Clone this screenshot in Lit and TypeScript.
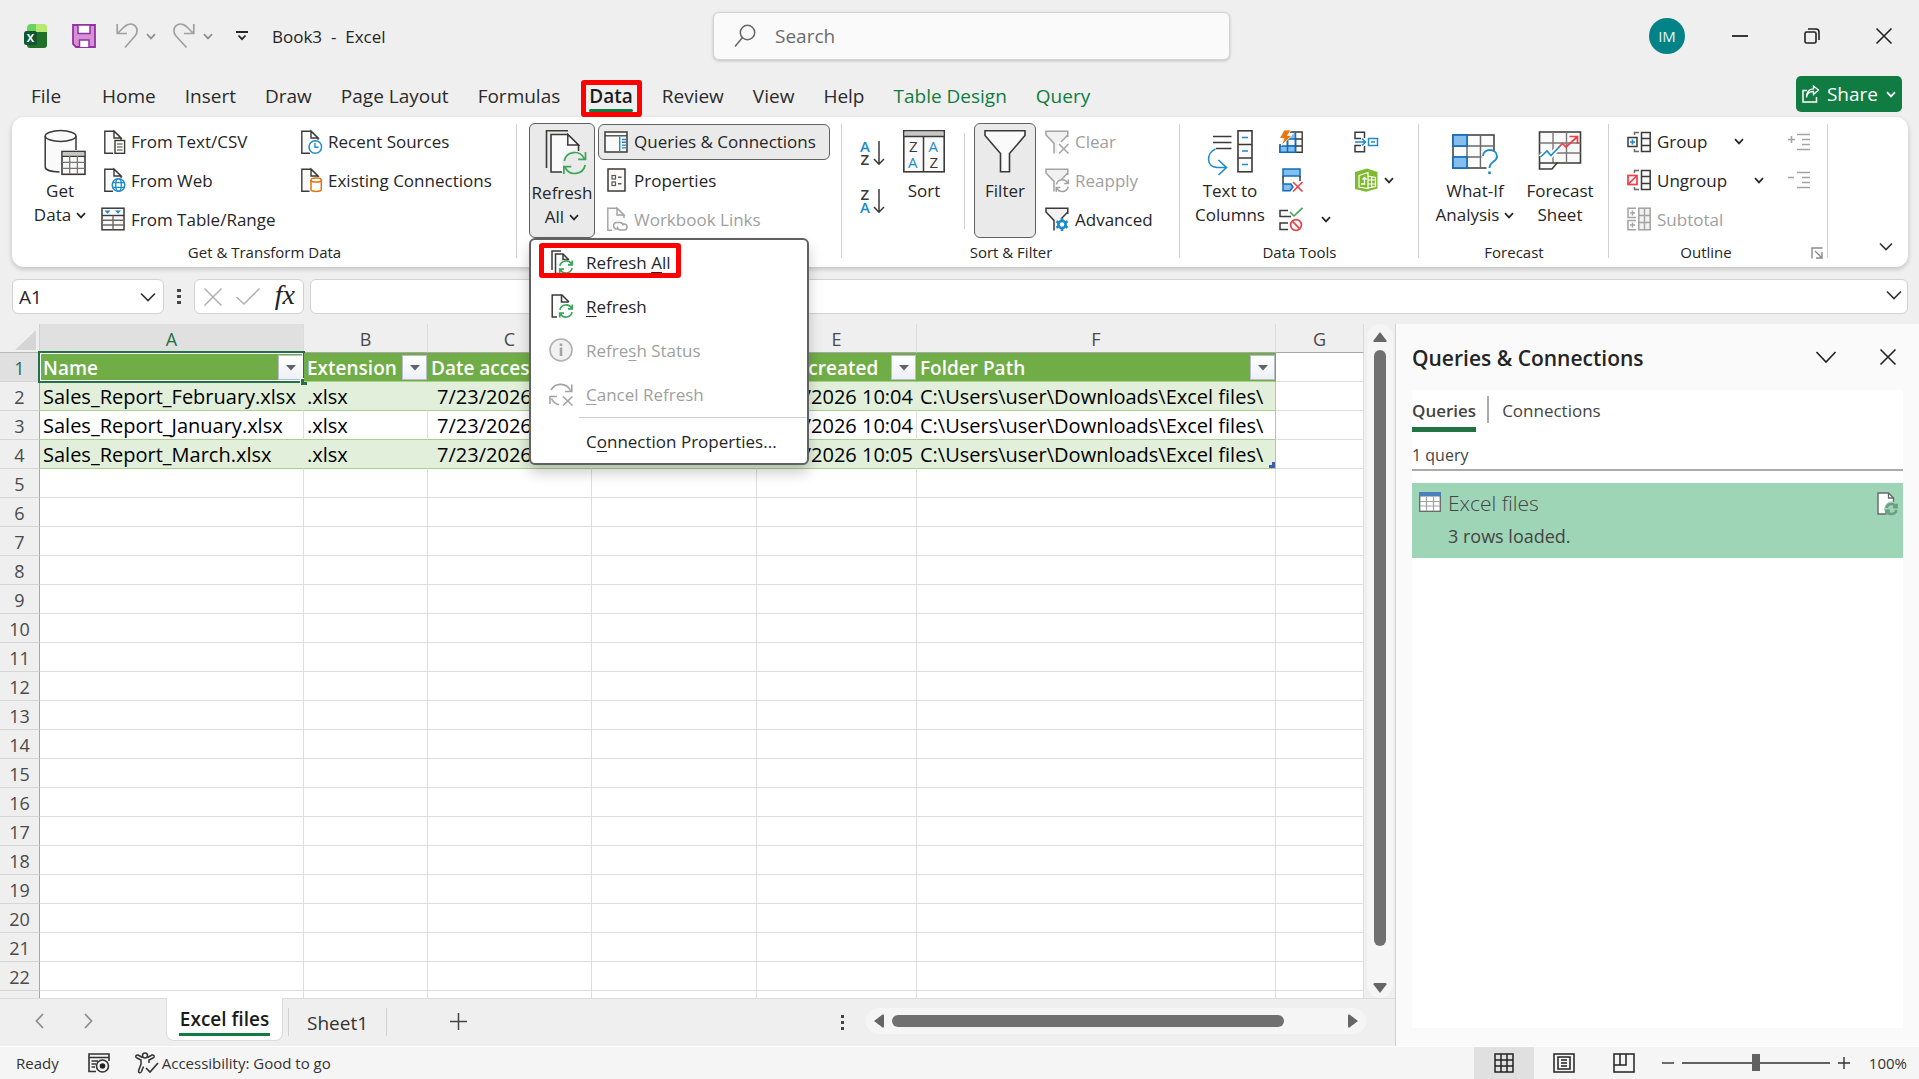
import { LitElement, html, svg, css, nothing, TemplateResult } from "lit";
import { customElement, property } from "lit/decorators.js";
import { classMap } from "lit/directives/class-map.js";

const K = "#3b3a39";
const BLUE = "#1e8bcd";
const GREEN = "#3ba55a";
const RED = "#ee3f46";
const GREY = "#a3a3a3";
const FILL = "#fafafa";

type Art = TemplateResult | TemplateResult[];

const icon = (w: number, h: number, art: Art) =>
  html`<svg width=${w} height=${h} viewBox="0 0 ${w} ${h}" fill="none" aria-hidden="true">${art}</svg>`;

/* ---------- shared shapes ---------- */

const page = (c: string) => svg`
  <path d="M12 23.2H3.8V1.2H13L20 8V11" fill=${FILL} stroke=${c} stroke-width="1.4"/>
  <path d="M13 1.2V8H20Z" fill="#fff" stroke=${c} stroke-width="1.4"/>`;

const arrows = (x: number, y: number, s: number, c: string, w = 1.5) => svg`
  <g transform="translate(${x} ${y}) scale(${s})" stroke=${c} stroke-width=${w / s} fill="none">
    <path d="M-10.5-2A10.7 10.7 0 0 1 9.6-4.4M10.8-11V-3.6H3.4"/>
    <path d="M10.5 2A10.7 10.7 0 0 1-9.6 4.4M-10.8 11V3.6H-3.4"/>
  </g>`;

const funnel = (c: string) => svg`
  <path d="M1 1.2H23V5L14.5 13.5V23H9.5V13.5L1 5Z" fill="#f1f1f1"/>
  <path d="M22.8 7V1.2H1V5L9 13.4V23.5M22.8 5L16 12" stroke=${c} stroke-width="1.5"/>`;

const chevron = (w = 10) =>
  html`<svg class="chev" width=${w} height=${w / 2 + 2} viewBox="0 0 10 7" fill="none" aria-hidden="true">
    <path d="M1 1.2L5 5.4L9 1.2" stroke="currentColor" stroke-width="1.7"/></svg>`;

const wideChevron = (w: number) =>
  icon(w, w / 2 + 2, svg`<path d="M1 1.5L${w / 2} ${w / 2 + 0.5}L${w - 1} 1.5" stroke="#333" stroke-width="1.7"/>`);

/* ---------- ribbon icons ---------- */

const I = {
  getData: icon(42, 46, svg`
    <path d="M1.2 7V38C1.2 41 8 43 16.5 43H17V23H32V7" fill=${FILL}/>
    <ellipse cx="16.6" cy="7" rx="15.4" ry="5.4" fill=${FILL} stroke=${K} stroke-width="1.5"/>
    <path d="M1.2 7V38C1.2 40.800 7 42.800 15.500 43M32 7V21" stroke=${K} stroke-width="1.5"/>
    <rect x="18" y="22.500" width="23" height="22.800" fill=${FILL} stroke=${K} stroke-width="1.600"/>
    <path d="M18.800 23.300H40.200V27H18.800Z" fill="#c8c6c4"/>
    <path d="M18 27.400H41" stroke=${K} stroke-width="1.200"/>
    <path d="M18 33.400H41M18 39.400H41M25.700 27V45M33.400 27V45" stroke="#797774" stroke-width="1.300"/>`),
  text: icon(24, 24, svg`${page(K)}
    <rect x="14" y="10.500" width="9.600" height="12.800" fill="#fff" stroke=${K} stroke-width="1.400"/>
    <path d="M16 14H21.600M16 17H21.600M16 20H21.600" stroke=${K} stroke-width="1.200"/>`),
  web: icon(24, 24, svg`${page(K)}
    <circle cx="17.500" cy="17" r="7.600" fill="#fff"/>
    <circle cx="17.500" cy="17" r="6.300" fill="#fff" stroke=${BLUE} stroke-width="1.500"/>
    <ellipse cx="17.500" cy="17" rx="2.800" ry="6.300" stroke=${BLUE} stroke-width="1.300"/>
    <path d="M11.500 14.700H23.500M11.500 19.300H23.500" stroke=${BLUE} stroke-width="1.300"/>`),
  range: icon(24, 24, svg`
    <rect x="1" y="1.200" width="22" height="21.600" fill=${FILL} stroke=${K} stroke-width="1.500"/>
    <path d="M1 8.500H23" stroke=${K} stroke-width="1.400"/>
    <path d="M1 13.300H23M1 18H23M12 8.500V22.500" stroke="#6b6967" stroke-width="1.400"/>
    <path d="M3.500 3.500H9.500L6.500 6.800ZM14 3.500H20L17 6.800Z" fill=${BLUE}/>`),
  recent: icon(24, 24, svg`${page(K)}
    <circle cx="17.300" cy="17" r="7.800" fill="#fff"/>
    <circle cx="17.300" cy="17" r="6.300" fill="#fff" stroke=${BLUE} stroke-width="1.500"/>
    <path d="M17 13V17.300H20.500" stroke=${BLUE} stroke-width="1.400"/>`),
  existing: icon(24, 24, svg`${page(K)}
    <rect x="11.500" y="9" width="12.500" height="15" fill="#fff"/>
    <path d="M13 12V21.500C13 24 23.300 24 23.300 21.500V12" fill="#fff" stroke="#e0730c" stroke-width="1.500"/>
    <ellipse cx="18.150" cy="12" rx="5.150" ry="2.100" fill="#fff" stroke="#e0730c" stroke-width="1.500"/>`),
  refreshBig: icon(42, 46, svg`
    <path d="M1.500 39V1.700H23" stroke=${K} stroke-width="1.600"/>
    <path d="M17 43H6V5.500H22.800L33.500 16V22" fill=${FILL} stroke=${K} stroke-width="1.600"/>
    <path d="M22.800 5.500V16H33.500Z" fill="#fff" stroke=${K} stroke-width="1.500"/>
    <circle cx="29.700" cy="34" r="12.500" fill="#eaeaea"/>
    ${arrows(29.7, 34, 1, GREEN, 1.7)}`),
  queries: icon(24, 24, svg`
    <rect x="1" y="2" width="22" height="20" fill=${FILL} stroke=${K} stroke-width="1.500"/>
    <path d="M1 5.800H23" stroke=${K} stroke-width="1.300"/>
    <path d="M15.700 6.500V21.500" stroke=${BLUE} stroke-width="1.400"/>
    <path d="M18 9.500H22M18 12.300H22M18 15.100H22M18 17.900H22" stroke=${BLUE} stroke-width="1.400"/>`),
  properties: icon(24, 24, svg`
    <rect x="4" y="1" width="17" height="22" fill=${FILL} stroke=${K} stroke-width="1.500"/>
    <rect x="8" y="7.500" width="3.500" height="3.500" stroke="#5b5957" stroke-width="1.200"/>
    <rect x="8" y="14" width="3.500" height="3.500" stroke="#5b5957" stroke-width="1.200"/>
    <path d="M14 9.200H17.500M14 15.700H17.500" stroke="#5b5957" stroke-width="1.400"/>`),
  links: icon(24, 24, svg`${page(GREY)}
    <rect x="8" y="14" width="16" height="9.800" fill="#fff"/>
    <path d="M14 22H12A3.400 3.400 0 0 1 12 15.500H16A3.200 3.200 0 0 1 19 18.500" stroke=${GREY} stroke-width="1.500"/>
    <path d="M18 17H20A3 3 0 0 1 20 23H16A3 3 0 0 1 13.500 19.500" stroke=${GREY} stroke-width="1.500"/>`),
  az: icon(24, 26, svg`
    <text x="0" y="11.500" class="az" fill=${BLUE}>A</text>
    <text x="0.500" y="24.500" class="az" fill=${K}>Z</text>
    <path d="M19 1V24M14 19L19 24.200L24 19" stroke=${K} stroke-width="1.500"/>`),
  za: icon(24, 26, svg`
    <text x="0.500" y="11.500" class="az" fill=${K}>Z</text>
    <text x="0" y="24.500" class="az" fill=${BLUE}>A</text>
    <path d="M19 1V24M14 19L19 24.200L24 19" stroke=${K} stroke-width="1.500"/>`),
  sort: icon(42, 46, svg`
    <rect x="0.800" y="1.800" width="40.400" height="41" fill=${FILL} stroke=${K} stroke-width="1.600"/>
    <path d="M1.600 2.600H40.400V7H1.600Z" fill="#c8c6c4"/>
    <path d="M1 7.600H41M20.500 7.600V43" stroke=${K} stroke-width="1.500"/>
    <text x="6" y="22.500" class="zz" fill=${K}>Z</text><text x="5" y="38.500" class="zz" fill=${BLUE}>A</text>
    <text x="25.500" y="22.500" class="zz" fill=${BLUE}>A</text><text x="26.500" y="38.500" class="zz" fill=${K}>Z</text>`),
  filter: icon(42, 46, svg`
    <path d="M1 1.800H41V6.500L25.500 24.500V42.800H16.500V24.500L1 6.500Z" fill=${FILL} stroke=${K} stroke-width="1.600"/>`),
  clear: icon(24, 24, svg`${funnel(GREY)}
    <path d="M12.500 12.500H24V24H12.500Z" fill="#fff"/>
    <path d="M14 14L23.500 23.500M23.500 14L14 23.500" stroke=${GREY} stroke-width="1.500"/>`),
  reapply: icon(24, 24, svg`${funnel(GREY)}<rect x="10.500" y="11" width="14" height="13" fill="#fff"/>
    ${arrows(17.3, 17.6, 0.56, GREY, 1.5)}`),
  advanced: icon(24, 24, svg`${funnel(K)}<circle cx="17" cy="17.500" r="6" fill="#fff"/>
    <circle cx="17" cy="17.500" r="3.600" stroke=${BLUE} stroke-width="2.600"/>
    <path d="M17 11V13.500M17 21.500V24M11.400 14.300L13.500 15.500M20.500 19.500L22.600 20.700M11.400 20.700L13.500 19.500M20.500 15.500L22.600 14.300" stroke=${BLUE} stroke-width="2.600"/>`),
  columns: icon(46, 46, svg`
    <path d="M6 7.500H24.500M6 13.500H24.500M9 19.500H24.500" stroke=${K} stroke-width="1.500"/>
    <path d="M8.500 20C-1 24 -1 38 10 38.500H19M11.500 31L19.500 38.500L11.500 46" stroke=${BLUE} stroke-width="1.600"/>
    <rect x="31" y="1.800" width="14" height="41" fill=${FILL} stroke=${K} stroke-width="1.600"/>
    <path d="M31 15.500H45M31 29H45" stroke=${K} stroke-width="1.500"/>
    <path d="M35 8.500H41M35 22H41M35 35.500H41" stroke=${BLUE} stroke-width="1.600"/>`),
  flash: icon(24, 24, svg`
    <path d="M5.500 2H23.200V22.300H1V14" fill=${FILL} stroke=${K} stroke-width="1.400"/>
    <path d="M14 4L16.500 2V9H8.500Z" fill="#83beec"/>
    <path d="M8.500 9H16.500V16H8.500Z" fill=${FILL} stroke="#0f6cbd" stroke-width="1.500"/>
    <path d="M1 16H16.500V22.300H1Z" fill="#83beec" stroke="#0f6cbd" stroke-width="1.500"/>
    <path d="M8.500 9V22.300M16.500 2V22.300" stroke="#0f6cbd" stroke-width="1.500"/>
    <path d="M16.500 9H23M16.500 16H23" stroke=${K} stroke-width="1.300"/>
    <path d="M5 0H12L8.500 5.500H13L2.500 15.500L5 8.500H0.500Z" fill="#e8760e" stroke="#fff" stroke-width="0.800"/>`),
  duplicates: icon(24, 24, svg`
    <rect x="4" y="1" width="17" height="7" fill="#83beec" stroke="#0f6cbd" stroke-width="1.500"/>
    <path d="M4 8V16M21 8V13" stroke=${K} stroke-width="1.500"/>
    <path d="M12 16H4V22.800H11L14 19Z" fill="#83beec" stroke="#0f6cbd" stroke-width="1.500"/>
    <path d="M14 14L23.500 23.500M23.500 14L14 23.500" stroke=${RED} stroke-width="1.600"/>`),
  validation: icon(24, 24, svg`
    <path d="M9 3.500H1V9.500H12M9 16H1V22.500H9" stroke=${K} stroke-width="1.500"/>
    <path d="M11 5L15 9L23.500 0.800" stroke=${GREEN} stroke-width="1.600"/>
    <circle cx="17" cy="18" r="5.400" stroke=${RED} stroke-width="1.700"/>
    <path d="M13.200 14.200L20.800 21.800" stroke=${RED} stroke-width="1.700"/>`),
  consolidate: icon(24, 24, svg`
    <path d="M10.500 8V2.200H1V8.500H7M10.500 16V21.800H1V15.500H7" stroke=${K} stroke-width="1.500"/>
    <path d="M1 12H11.500M8 8.500L11.500 12L8 15.500" stroke=${BLUE} stroke-width="1.500"/>
    <rect x="14.500" y="8.500" width="9" height="7" stroke=${BLUE} stroke-width="1.500"/>
    <path d="M17 12H21" stroke=${BLUE} stroke-width="1.500"/>`),
  model: icon(24, 24, svg`
    <path d="M1 4L13 0.500L23.500 4V20.500L12 23.800L1 21Z" fill="#7fba2f"/>
    <path d="M5 7.500L14 4.500V20.500L5 19Z" fill="#7fba2f" stroke="#fff" stroke-width="1.200"/>
    <path d="M14 8L21.500 9.500V18.500L14 20M14 12H21.500M14 16H21.500M17.700 9V19.500" stroke="#fff" stroke-width="1.200"/>
    <path d="M7 16H10.500V10M8.500 11.500L10.500 9.500L12.500 11.500" stroke="#fff" stroke-width="1.300"/>`),
  whatIf: icon(46, 46, svg`
    <rect x="1" y="6" width="41" height="33" fill=${FILL} stroke=${K} stroke-width="1.500"/>
    <path d="M1 17H42M1 28H42M28.500 6V39M15 6V39" stroke="#6b6967" stroke-width="1.500"/>
    <rect x="1" y="6" width="14" height="11" fill="#83beec" stroke="#0f6cbd" stroke-width="1.600"/>
    <rect x="1" y="28" width="14" height="11" fill="#83beec" stroke="#0f6cbd" stroke-width="1.600"/>
    <path d="M29.500 22H44V45H34.500V38H29.500Z" fill="#fff"/>
    <path d="M31 27C31 19 45 19 45 27.500C45 33 37.500 32 37.500 39" stroke=${BLUE} stroke-width="1.900"/>
    <rect x="36.200" y="42.500" width="2.600" height="2.600" fill=${BLUE}/>`),
  forecast: icon(44, 46, svg`
    <path d="M1.500 3H42.500V34H19L14 40H1.500Z" fill=${FILL} stroke=${K} stroke-width="1.600"/>
    <path d="M1.500 14H42.500M1.500 24H42.500M15 3V34M28.500 3V34" stroke="#797774" stroke-width="1.400"/>
    <path d="M1.500 34H20" stroke=${K} stroke-width="1.500"/>
    <path d="M2.500 28L9 22L13 26.500L22 17" stroke="#fff" stroke-width="5"/>
    <path d="M2.500 28L9 22L13 26.500L22 17" stroke=${BLUE} stroke-width="1.700"/>
    <path d="M21 18L24.500 14.500L28 18L39.500 7.500M31.500 7.500H39.500V15" stroke=${RED} stroke-width="1.700"/>`),
  group: icon(24, 24, svg`
    <path d="M12 2.500H7.500V5M12 21.500H7.500V19" stroke="#6b6967" stroke-width="1.500"/>
    <rect x="14.500" y="2.500" width="8.700" height="19" fill=${FILL} stroke=${K} stroke-width="1.500"/>
    <path d="M14.500 8.500H23M14.500 15.500H23" stroke=${K} stroke-width="1.400"/>
    <rect x="1" y="7.500" width="9" height="9" fill=${FILL} stroke=${K} stroke-width="1.500"/>
    <path d="M5.500 9.500V14.500M3 12H8" stroke=${BLUE} stroke-width="1.700"/>`),
  ungroup: icon(24, 24, svg`
    <path d="M12 2.500H7.500V5M12 21.500H7.500V19" stroke="#6b6967" stroke-width="1.500"/>
    <rect x="14.500" y="2.500" width="8.700" height="19" fill=${FILL} stroke=${K} stroke-width="1.500"/>
    <path d="M14.500 8.500H23M14.500 15.500H23" stroke=${K} stroke-width="1.400"/>
    <rect x="1" y="7.500" width="9" height="9" fill="#fff" stroke=${RED} stroke-width="1.700"/>
    <path d="M1.500 16L9.500 8" stroke=${RED} stroke-width="1.700"/>`),
  subtotal: icon(24, 24, svg`
    <path d="M9 1.200H1V10.500H9M9 13.500H1V22.800H9" stroke=${GREY} stroke-width="1.500"/>
    <path d="M5.500 3.500V8.500M3 6H8M5.500 15.500V20.500M3 18H8" stroke=${GREY} stroke-width="1.500"/>
    <rect x="11.800" y="1.200" width="11.400" height="21.600" fill="#f1f1f1" stroke=${GREY} stroke-width="1.500"/>
    <path d="M17.500 1V23M12 8.500H23M12 15.500H23" stroke=${GREY} stroke-width="1.400"/>`),
  showDetail: icon(22, 18, svg`
    <path d="M9 1.500H22M14 6.500H22M14 11.500H22M9 16.500H22M0 6.500H7M3.500 3V10" stroke=${GREY} stroke-width="1.600"/>`),
  hideDetail: icon(22, 18, svg`
    <path d="M9 1.500H22M14 6.500H22M14 11.500H22M9 16.500H22M0 6.500H6" stroke=${GREY} stroke-width="1.600"/>`),
  menuAll: icon(24, 24, svg`<g transform="translate(2 0)">
    <path d="M1 20V1H10" stroke=${K} stroke-width="1.500"/>
    <path d="M7 23.500H4.500V4H12L18 10" fill=${FILL} stroke=${K} stroke-width="1.500"/>
    <path d="M12 4V9.500H17.500" stroke=${K} stroke-width="1.500"/>
    <circle cx="15" cy="17" r="7.300" fill="#fff"/>${arrows(15, 17, 0.58, GREEN, 1.7)}</g>`),
  menuRefresh: icon(24, 24, svg`<g transform="translate(2 0)">
    <path d="M6 23H1.200V1H11L18 8" fill=${FILL} stroke=${K} stroke-width="1.500"/>
    <path d="M10.500 1V8H17.500" stroke=${K} stroke-width="1.500"/>
    <circle cx="15" cy="17" r="7.300" fill="#fff"/>${arrows(15, 17, 0.58, GREEN, 1.7)}</g>`),
  menuStatus: icon(24, 24, svg`
    <circle cx="12" cy="12" r="11" fill="#f1f1f1" stroke="#b0b0b0" stroke-width="1.600"/>
    <path d="M12 9.500V18M12 5.500V8" stroke=${GREY} stroke-width="2.600"/>`),
  menuCancel: icon(24, 24, svg`
    <path d="M2 8A11 11 0 0 1 21.500 8.500M22.800 2.500V9.500H16M10 22.800A11 11 0 0 1 2.500 16.500M1 22V14.500H8" stroke=${GREY} stroke-width="1.600"/>
    <path d="M14 14.500L23.500 23.500M23.500 14.500L14 23.500" stroke=${GREY} stroke-width="1.600"/>`),
};

/* ---------- data ---------- */

const TABS = ["File", "Home", "Insert", "Draw", "Page Layout", "Formulas", "Data", "Review", "View", "Help", "Table Design", "Query"];

const COLUMNS = [
  { letter: "A", width: 264, title: "Name" },
  { letter: "B", width: 124, title: "Extension" },
  { letter: "C", width: 164, title: "Date accessed" },
  { letter: "D", width: 165, title: "Date modified" },
  { letter: "E", width: 160, title: "Date created" },
  { letter: "F", width: 359, title: "Folder Path" },
  { letter: "G", width: 0, title: "" },
];

const FOLDER = "C:\\Users\\user\\Downloads\\Excel files\\";
const FILES = [
  ["Sales_Report_February.xlsx", ".xlsx", "7/23/2026 10:04", "7/23/2026 10:04", "7/23/2026 10:04", FOLDER],
  ["Sales_Report_January.xlsx", ".xlsx", "7/23/2026 10:04", "7/23/2026 10:04", "7/23/2026 10:04", FOLDER],
  ["Sales_Report_March.xlsx", ".xlsx", "7/23/2026 10:05", "7/23/2026 10:05", "7/23/2026 10:05", FOLDER],
];

const base = css`
  :host, *, *::before, *::after { box-sizing: border-box; }
  button, input { font: inherit; color: inherit; margin: 0; }
  button { background: none; border: 0; padding: 0; cursor: default; display: flex; align-items: center; }
  svg { display: block; flex: none; overflow: visible; }
`;

/* ---------- title bar and tabs ---------- */

@customElement("title-bar")
class TitleBar extends LitElement {
  static styles = [base, css`
    :host { display: block; }
    .bar { display: grid; grid-template-columns: 713px minmax(200px, 517px) 1fr; height: 72px; padding-top: 12px; align-items: start; }
    .left, .right { display: flex; align-items: center; height: 48px; }
    .left { padding-left: 24px; }
    .save { margin-left: 25px; }
    .undo { margin-left: 20px; gap: 8px; color: #8f8f8f; }
    .redo { margin-left: 17px; }
    .more { margin-left: 23px; }
    .title { margin-left: 24px; font-size: 17px; white-space: pre; color: #242424; }
    .search { display: flex; align-items: center; gap: 19px; height: 48px; padding: 0 20px; background: #fafafa; border: 1px solid #d4d4d4; border-radius: 6px; box-shadow: 0 1px 3px #0003; }
    .search input { flex: 1; min-width: 0; border: 0; background: none; outline: 0; font-size: 19px; padding: 0; }
    .search input::placeholder { color: #6b6b6b; opacity: 1; }
    .right { justify-content: flex-end; padding-right: 26px; }
    .avatar { width: 36px; height: 36px; border-radius: 50%; background: #038387; color: #e4f2f2; font-size: 15px; justify-content: center; margin-right: 46px; }
    .win { width: 18px; height: 36px; justify-content: center; margin-left: 54px; }
    .win.first { margin-left: 0; }
    .tabs { display: flex; height: 45px; align-items: flex-start; padding: 4px 17px 0 31px; }
    .list { display: flex; gap: 29px; flex: 1; }
    .tab { position: relative; height: 41px; padding-bottom: 2px; font-size: 19px; white-space: nowrap; color: #2b2b2b; }
    .file { margin-right: 12px; }
    .active { font-weight: 600; color: #1c1c1c; }
    .active::before { content: ""; position: absolute; left: 0; right: 0; bottom: 5px; height: 3px; border-radius: 2px; background: #107c41; }
    .active::after { content: ""; position: absolute; inset: 4px -9px 0 -8px; border: 5px solid #f00; border-radius: 3px; }
    .green { color: #107c41; }
    .share { height: 36px; padding: 0 6px; gap: 8px; border-radius: 5px; background: #107c41; color: #fff; font-size: 19px; }
  `];

  render() {
    return html`
      <header class="bar">
        <div class="left">
          ${icon(23, 24, svg`
            <path d="M7 0H12V10H3V4A4 4 0 0 1 7 0Z" fill="#6fd25f"/><path d="M12 0H20A3 3 0 0 1 23 3V8H12Z" fill="#b7ea73"/>
            <path d="M3 8H23V21A3 3 0 0 1 20 24H6A3 3 0 0 1 3 21Z" fill="#21702a"/>
            <rect x="0" y="7" width="13" height="14" rx="2.500" fill="#0e5733"/>
            <text x="6.500" y="18.200" text-anchor="middle" font-family="Open Sans, sans-serif" font-weight="700" font-size="11" fill="#fff">X</text>`)}
          <button class="save" aria-label="Save">${icon(24, 24, svg`
            <path d="M1 1H23V23H4L1 20Z" fill="#d691d9" stroke="#9332a0" stroke-width="1.800"/>
            <path d="M6 1H18V9.500H6Z" fill="#fff" stroke="#9332a0" stroke-width="1.500"/>
            <path d="M7.500 23V16H17V23" fill="#fff" stroke="#9332a0" stroke-width="1.500"/>`)}</button>
          <button class="undo" aria-label="Undo">${icon(22, 26, svg`
            <path d="M1.200 1V10.500H11M1.500 10.500L8 4C17-4 25 6 19 13L9 24.500" stroke="#a0a0a0" stroke-width="1.700"/>`)}${chevron()}</button>
          <button class="undo redo" aria-label="Redo">${icon(22, 26, svg`
            <path d="M20.800 1V10.500H11M20.500 10.500L14 4C5-4-3 6 3 13L13.500 24.500" stroke="#a0a0a0" stroke-width="1.700"/>`)}${chevron()}</button>
          <button class="more" aria-label="Customize Quick Access Toolbar">${icon(12, 10, svg`
            <path d="M0 1H12M2.500 4.500L6 8.200L9.500 4.500" stroke="#262626" stroke-width="1.800"/>`)}</button>
          <span class="title">Book3  -  Excel</span>
        </div>
        <label class="search">
          ${icon(22, 24, svg`<circle cx="13.500" cy="8.500" r="7.200" stroke="#666" stroke-width="1.500"/><path d="M8.500 13.500L1 22.500" stroke="#666" stroke-width="1.500"/>`)}
          <input type="search" placeholder="Search" aria-label="Search">
        </label>
        <div class="right">
          <button class="avatar" aria-label="Account">IM</button>
          <button class="win first" aria-label="Minimize">${icon(16, 2, svg`<path d="M0 1H16" stroke="#222" stroke-width="1.800"/>`)}</button>
          <button class="win" aria-label="Restore">${icon(16, 16, svg`
            <rect x="1" y="4" width="11" height="11" rx="1.500" stroke="#222" stroke-width="1.600"/>
            <path d="M4 1H12A3 3 0 0 1 15 4V12" stroke="#222" stroke-width="1.600"/>`)}</button>
          <button class="win" aria-label="Close">${icon(16, 16, svg`<path d="M0.500 0.500L15.500 15.500M15.500 0.500L0.500 15.500" stroke="#222" stroke-width="1.600"/>`)}</button>
        </div>
      </header>
      <nav class="tabs">
        <div class="list" role="tablist">
          ${TABS.map((t, i) => html`<button role="tab" class=${classMap({ tab: true, file: i === 0, active: t === "Data", green: i > 9 })}>${t}</button>`)}
        </div>
        <button class="share">${icon(17, 18, svg`
          <path d="M5 5.500H1V17H14.500V12" stroke="#fff" stroke-width="1.500"/>
          <path d="M4.500 12.500C5 8 8 6.500 11.500 6.500V9.500L16.500 5L11.500 1V3.800C7 4 4.500 7 4.500 12.500Z" stroke="#fff" stroke-width="1.300"/>`)}Share${chevron()}</button>
      </nav>`;
  }
}

/* ---------- ribbon ---------- */

@customElement("data-ribbon")
class DataRibbon extends LitElement {
  static styles = [base, css`
    :host { display: block; padding: 0 11px 0 12px; position: relative; z-index: 2; }
    .ribbon { display: flex; height: 150px; background: #fff; border-radius: 12px; box-shadow: 0 2px 5px #0003; font-size: 17px; color: #262626; padding-top: 6px; }
    .group { display: flex; flex-direction: column; position: relative; flex: none; }
    .group::after { content: ""; position: absolute; right: 0; top: 1px; height: 134px; width: 1px; background: #d1d1d1; }
    .g1 { width: 505px; } .g2 { width: 325px; } .g3 { width: 338px; } .g4 { width: 239px; } .g5 { width: 190px; } .g6 { width: 219px; }
    .body { display: flex; gap: 3px; height: 116px; padding: 0 10px 0 12px; }
    .g1 .body { padding-left: 16px; } .g4 .body, .g5 .body { padding-left: 10px; }
    .caption { height: 28px; line-height: 26px; text-align: center; font-size: 15px; }
    .g6 .caption { display: flex; justify-content: center; padding-right: 25px; }
    .launch { position: absolute; right: 5px; bottom: 8px; }
    .big { flex-direction: column; height: 115px; padding-top: 5px; border: 1px solid transparent; border-radius: 6px; line-height: 24px; white-space: nowrap; }
    .big > svg { margin-bottom: 4px; }
    .w64 > svg { margin-left: 9px; }
    .w66 > svg { margin: 0 0 6px 7px; }
    .line { display: flex; align-items: center; gap: 5px; }
    .w62 { width: 62px; } .w64 { width: 64px; } .w66 { width: 66px; } .w72 { width: 72px; } .w80 { width: 80px; } .w92 { width: 92px; }
    .col { display: grid; grid-template-rows: 37px 40px 38px; align-items: center; align-content: start; justify-items: start; }
    .c194 { width: 194px; } .c72 { width: 72px; } .c158 { width: 158px; }
    .small { height: 36px; gap: 6px; padding: 0 5px; border: 1px solid transparent; border-radius: 6px; white-space: nowrap; }
    .small.toggle { padding-right: 13px; }
    .small.pressed, .big.pressed { background: #eaeaea; border-color: #616161; }
    .small.wide { gap: 18px; } .far .chev { margin-left: 21px; }
    .off { color: #a0a0a0; }
    .orders { display: flex; flex-direction: column; gap: 12px; padding-top: 12px; width: 36px; }
    .divider { width: 1px; height: 96px; margin: 10px 6px; background: #d1d1d1; }
    .az { font: 600 15px "Open Sans", sans-serif; }
    .zz { font: 400 15px "Open Sans", sans-serif; }
    .collapse { margin: auto 15px 16px auto; }
    .anchor { position: relative; }
    .menu { position: absolute; top: 115px; left: 0; width: 280px; height: 227px; padding: 3px 0 0; background: #fff; border: 2px solid #616161; border-radius: 6px; box-shadow: 0 8px 14px #0003; }
    .item { position: relative; width: 100%; height: 44px; padding-left: 18px; gap: 13px; white-space: nowrap; }
    .item:first-child { height: 41px; padding-bottom: 3px; }
    .item u { text-decoration-thickness: 1px; text-underline-offset: 3px; }
    .item .slot { width: 24px; }
    .item:last-child { height: 47px; }
    .marked::after { content: ""; position: absolute; left: 8px; top: 0; width: 142px; height: 35px; border: 5px solid #f00; border-radius: 3px; }
    .rule { height: 1px; margin: 1px 0 0 48px; background: #d1d1d1; }
  `];

  private small(art: unknown, label: string, opts: { off?: boolean; pressed?: boolean; arrow?: boolean; cls?: string; name?: string } = {}) {
    const cls: Record<string, boolean> = { small: true, off: !!opts.off, pressed: !!opts.pressed };
    if (opts.cls) cls[opts.cls] = true;
    return html`<button class=${classMap(cls)} ?disabled=${!!opts.off} aria-label=${opts.name ?? label}>
      ${art}${label ? html`<span>${label}</span>` : nothing}${opts.arrow ? chevron() : nothing}</button>`;
  }

  private big(art: unknown, lines: string[], width: string, arrow = false, pressed = false) {
    return html`<button class="big ${width} ${pressed ? "pressed" : ""}">${art}
      ${lines.map((l, i) => html`<span class="line">${l}${arrow && i === lines.length - 1 ? chevron() : nothing}</span>`)}</button>`;
  }

  private menu() {
    return html`<div class="menu" role="menu">
      <button class="item marked" role="menuitem">${I.menuAll}<span>Refresh <u>A</u>ll</span></button>
      <button class="item" role="menuitem">${I.menuRefresh}<span><u>R</u>efresh</span></button>
      <button class="item off" role="menuitem" disabled>${I.menuStatus}<span>Refre<u>s</u>h Status</span></button>
      <button class="item off" role="menuitem" disabled>${I.menuCancel}<span><u>C</u>ancel Refresh</span></button>
      <div class="rule" role="separator"></div>
      <button class="item" role="menuitem"><span class="slot"></span><span>C<u>o</u>nnection Properties...</span></button>
    </div>`;
  }

  render() {
    return html`<div class="ribbon">
      <section class="group g1">
        <div class="body">
          ${this.big(I.getData, ["Get", "Data"], "w64", true)}
          <div class="col c194">${this.small(I.text, "From Text/CSV")}${this.small(I.web, "From Web")}${this.small(I.range, "From Table/Range")}</div>
          <div class="col">${this.small(I.recent, "Recent Sources")}${this.small(I.existing, "Existing Connections")}</div>
        </div>
        <div class="caption">Get &amp; Transform Data</div>
      </section>
      <section class="group g2">
        <div class="body">
          <div class="anchor">${this.big(I.refreshBig, ["Refresh", "All"], "w66", true, true)}${this.menu()}</div>
          <div class="col">
            ${this.small(I.queries, "Queries & Connections", { pressed: true, cls: "toggle" })}
            ${this.small(I.properties, "Properties")}
            ${this.small(I.links, "Workbook Links", { off: true })}
          </div>
        </div>
      </section>
      <section class="group g3">
        <div class="body">
          <div class="orders">${this.small(I.az, "", { name: "Sort A to Z" })}${this.small(I.za, "", { name: "Sort Z to A" })}</div>
          ${this.big(I.sort, ["Sort"], "w62")}
          <div class="divider"></div>
          ${this.big(I.filter, ["Filter"], "w62", false, true)}
          <div class="col">${this.small(I.clear, "Clear", { off: true })}${this.small(I.reapply, "Reapply", { off: true })}${this.small(I.advanced, "Advanced")}</div>
        </div>
        <div class="caption">Sort &amp; Filter</div>
      </section>
      <section class="group g4">
        <div class="body">
          ${this.big(I.columns, ["Text to", "Columns"], "w80")}
          <div class="col c72">
            ${this.small(I.flash, "", { name: "Flash Fill" })}${this.small(I.duplicates, "", { name: "Remove Duplicates" })}
            ${this.small(I.validation, "", { name: "Data Validation", arrow: true, cls: "wide" })}
          </div>
          <div class="col">${this.small(I.consolidate, "", { name: "Consolidate" })}${this.small(I.model, "", { name: "Data Model", arrow: true })}</div>
        </div>
        <div class="caption">Data Tools</div>
      </section>
      <section class="group g5">
        <div class="body">
          ${this.big(I.whatIf, ["What-If", "Analysis"], "w92", true)}
          ${this.big(I.forecast, ["Forecast", "Sheet"], "w72")}
        </div>
        <div class="caption">Forecast</div>
      </section>
      <section class="group g6">
        <div class="body">
          <div class="col c158">
            ${this.small(I.group, "Group", { arrow: true, cls: "far" })}${this.small(I.ungroup, "Ungroup", { arrow: true, cls: "far" })}
            ${this.small(I.subtotal, "Subtotal", { off: true })}
          </div>
          <div class="col">${this.small(I.showDetail, "", { off: true, name: "Show Detail" })}${this.small(I.hideDetail, "", { off: true, name: "Hide Detail" })}</div>
        </div>
        <div class="caption">Outline</div>
        <button class="launch" aria-label="Outline settings">${icon(12, 12, svg`
          <path d="M1 11.500V1H11.500M4 4L10.500 10.500M11 5V11H5" stroke="#8a8a8a" stroke-width="1.400"/>`)}</button>
      </section>
      <button class="collapse" aria-label="Collapse the Ribbon">${wideChevron(14)}</button>
    </div>`;
  }
}

/* ---------- formula bar ---------- */

@customElement("formula-bar")
class FormulaBar extends LitElement {
  static styles = [base, css`
    .bar { display: flex; padding: 12px 11px 10px 12px; height: 57px; }
    .box { display: flex; align-items: center; height: 35px; background: #fff; border: 1px solid #d1d1d1; border-radius: 6px; }
    .name { width: 152px; padding: 0 7px 0 6px; }
    input { border: 0; background: none; outline: 0; padding: 0; min-width: 0; flex: 1; font-size: 19px; color: #262626; }
    .dots { display: flex; flex-direction: column; gap: 3px; justify-content: center; width: 30px; align-items: center; }
    .dots i { width: 4px; height: 3px; background: #444; }
    .tools { width: 110px; padding: 0 8px 0 9px; justify-content: space-between; }
    .fx { font: italic 400 28px "Liberation Serif", serif; color: #222; line-height: 30px; padding-bottom: 3px; }
    .formula { flex: 1; margin-left: 6px; padding: 0 5px 3px 8px; }
  `];

  render() {
    return html`<div class="bar">
      <div class="box name"><input aria-label="Name Box" .value=${"A1"}><button aria-label="Open name list">${wideChevron(16)}</button></div>
      <div class="dots"><i></i><i></i><i></i></div>
      <div class="box tools">
        <button aria-label="Cancel">${icon(18, 18, svg`<path d="M0.500 0.500L17.500 17.500M17.500 0.500L0.500 17.500" stroke="#b0b0b0" stroke-width="1.500"/>`)}</button>
        <button aria-label="Enter">${icon(24, 17, svg`<path d="M0.500 9L8 16L23.500 0.500" stroke="#b0b0b0" stroke-width="1.500"/>`)}</button>
        <button class="fx" aria-label="Insert Function">fx</button>
      </div>
      <div class="box formula"><input aria-label="Formula bar"><button aria-label="Expand formula bar">${wideChevron(16)}</button></div>
    </div>`;
  }
}

/* ---------- worksheet ---------- */

@customElement("work-sheet")
class WorkSheet extends LitElement {
  @property({ type: Number }) rows = 23;

  static styles = [base, css`
    :host { display: flex; flex-direction: column; min-width: 0; min-height: 0; }
    .view { flex: 1; display: flex; min-height: 0; }
    .clip { flex: 1; min-width: 0; overflow: hidden; }
    table { width: 100%; table-layout: fixed; border-collapse: separate; border-spacing: 0; background: #fff; font: 20px "Open Sans", "Noto Sans", sans-serif; color: #000; }
    .rowcol { width: 40px; }
    th, td { height: 29px; padding: 2px 3px 0; border-right: 1px solid #dedede; border-bottom: 1px solid #dedede; white-space: nowrap; text-align: left; line-height: 26px; }
    td.date { text-align: right; }
    .letter, .num, .corner { background: #efefef; color: #4a4a4a; font: 400 18px "Open Sans", sans-serif; line-height: 26px; padding: 2px 0 0; text-align: center; }
    .letter { border-bottom-color: #a6a6a6; border-right-color: #dcdcdc; }
    .num { border-right-color: #a6a6a6; border-bottom-color: #d6d6d6; }
    .corner { border-right-color: #d0d0d0; border-bottom-color: #b8b8b8; }
    .corner svg { margin: 1px 0 0 15px; }
    .current { background: #e0e0e0; color: #1d7145; }
    .head { position: relative; background: #70ad47; border-color: #70ad47; border-bottom-color: #a9d08e; font-size: 19px; font-weight: 600; color: #fff; }
    .band td.in { background: #e2efda; border-right-color: #e2efda; }
    td.in { border-bottom-color: #a9d08e; }
    .band td.end, td.end { border-right-color: #a9d08e; position: relative; }
    .drop { position: absolute; right: 0; top: 2px; width: 25px; height: 25px; justify-content: center; background: linear-gradient(#fff, #edf0f6); border: 1px solid #b9bfc9; }
    .cursor { position: absolute; inset: -2px -2px -2px -2px; border: 2px solid #217346; box-shadow: inset 0 0 0 1px #fff; pointer-events: none; }
    .cursor::after { content: ""; position: absolute; right: -4px; bottom: -4px; width: 7px; height: 7px; background: #217346; border: 1px solid #fff; border-right: 0; border-bottom: 0; }
    .grip { position: absolute; right: 0; bottom: 0; }
    .track { background: #f5f5f5; border-radius: 13px; display: flex; align-items: center; }
    .v { flex-direction: column; width: 26px; margin: 0 2px 0 3px; padding: 8px 0 5px; }
    .v .thumb { width: 12px; flex: 0 0 596px; margin-top: 8px; border-radius: 6px; background: #707070; }
    .v .last { margin-top: auto; }
    .foot { display: flex; align-items: flex-start; height: 48px; border-top: 1px solid #dcdcdc; padding-left: 35px; }
    .nav { height: 44px; width: 9px; }
    .nav + .nav { margin-left: 40px; }
    .sheet { height: 43px; margin: -1px 0 0 73px; padding: 0 12px; background: #fff; border: 1px solid #dcdcdc; border-top: 0; border-radius: 0 0 8px 8px; font-size: 19px; font-weight: 600; color: #1c1c1c; position: relative; white-space: nowrap; min-width: 117px; justify-content: center; }
    .sheet::after { content: ""; position: absolute; left: 12px; right: 12px; bottom: 4px; height: 3px; background: #107c41; }
    .other { height: 28px; margin: 9px 0 0 5px; padding: 2px 18px 0; border-left: 1px solid #d1d1d1; border-right: 1px solid #d1d1d1; font-size: 19px; color: #333; }
    .add { height: 44px; margin-left: 63px; }
    .dots { display: flex; flex-direction: column; gap: 3px; margin: 16px 22px 0 auto; }
    .dots i { width: 3px; height: 3px; background: #444; }
    .h { width: 500px; height: 26px; margin: 9px 29px 0 0; padding: 0 8px; }
    .h .thumb { width: 392px; height: 12px; margin-left: 8px; border-radius: 6px; background: #707070; }
    .h .last { margin-left: auto; }
  `];

  private rowCells(n: number) {
    if (n === 1)
      return COLUMNS.map((c, i) => c.title
        ? html`<th class="head" scope="col">${c.title}<button class="drop" aria-label="Filter ${c.title}">${icon(10, 6, svg`<path d="M0 0H10L5 5.500Z" fill="#5f6266"/>`)}</button>${i === 0 ? html`<span class="cursor"></span>` : nothing}</th>`
        : html`<td></td>`);
    const file = FILES[n - 2];
    return COLUMNS.map((_, i) => file && i < 6
      ? html`<td class=${classMap({ in: true, date: i > 1 && i < 5, end: i === 5 })}>${file[i]}${n === 4 && i === 5
          ? html`<span class="grip">${icon(6, 6, svg`<path d="M6 0V6H0V3H3V0Z" fill="#3f5bb0"/>`)}</span>` : nothing}</td>`
      : html`<td></td>`);
  }

  render() {
    return html`
      <div class="view">
        <div class="clip">
          <table>
            <colgroup><col class="rowcol">${COLUMNS.map((c) => html`<col style=${c.width ? `width:${c.width}px` : ""}>`)}</colgroup>
            <thead><tr>
              <th class="corner" aria-label="Select all">${icon(21, 20, svg`<path d="M21 0V20H0Z" fill="#d6d6d6"/>`)}</th>
              ${COLUMNS.map((c, i) => html`<th scope="col" class=${classMap({ letter: true, current: i === 0 })}>${c.letter}</th>`)}
            </tr></thead>
            <tbody>
              ${Array.from({ length: this.rows }, (_, i) => i + 1).map((n) => html`
                <tr class=${n === 2 || n === 4 ? "band" : ""}>
                  <th scope="row" class=${classMap({ num: true, current: n === 1 })}>${n}</th>${this.rowCells(n)}
                </tr>`)}
            </tbody>
          </table>
        </div>
        <div class="track v" role="scrollbar" aria-orientation="vertical" aria-label="Rows">
          ${icon(14, 10, svg`<path d="M7 0L13.500 8.500Q14 10 12.500 10H1.500Q0 10 0.500 8.500Z" fill="#666"/>`)}
          <div class="thumb"></div>
          <div class="last">${icon(14, 10, svg`<path d="M7 10L13.500 1.500Q14 0 12.500 0H1.500Q0 0 0.500 1.500Z" fill="#666"/>`)}</div>
        </div>
      </div>
      <div class="foot">
        <button class="nav" aria-label="Previous sheets">${icon(9, 16, svg`<path d="M8 1L1.500 8L8 15" stroke="#8f8f8f" stroke-width="1.800"/>`)}</button>
        <button class="nav" aria-label="Next sheets">${icon(9, 16, svg`<path d="M1 1L7.500 8L1 15" stroke="#8f8f8f" stroke-width="1.800"/>`)}</button>
        <button class="sheet">Excel files</button>
        <button class="other">Sheet1</button>
        <button class="add" aria-label="New sheet">${icon(17, 17, svg`<path d="M8.500 0V17M0 8.500H17" stroke="#444" stroke-width="1.500"/>`)}</button>
        <div class="dots"><i></i><i></i><i></i></div>
        <div class="track h" role="scrollbar" aria-orientation="horizontal" aria-label="Columns">
          ${icon(10, 14, svg`<path d="M0 7L8.500 0.500Q10 0 10 1.500V12.500Q10 14 8.500 13.500Z" fill="#666"/>`)}
          <div class="thumb"></div>
          <div class="last">${icon(10, 14, svg`<path d="M10 7L1.500 0.500Q0 0 0 1.500V12.500Q0 14 1.500 13.500Z" fill="#666"/>`)}</div>
        </div>
      </div>`;
  }
}

/* ---------- queries pane ---------- */

@customElement("queries-pane")
class QueriesPane extends LitElement {
  static styles = [base, css`
    :host { display: flex; flex-direction: column; background: #fafafa; border-left: 1px solid #d1d1d1; padding: 0 16px 18px; color: #444; }
    .top { display: flex; align-items: center; height: 66px; padding-right: 7px; }
    h2 { margin: 0 auto 0 0; padding-top: 2px; font-size: 21px; font-weight: 600; color: #242424; }
    .top button + button { margin-left: 44px; }
    .content { flex: 1; background: #fff; font-size: 17px; }
    .tabs { display: flex; height: 42px; padding-top: 6px; }
    .tab { height: 36px; padding-bottom: 8px; white-space: nowrap; }
    .on { font-weight: 600; border-bottom: 5px solid #217346; padding-bottom: 3px; }
    .bar { width: 2px; height: 27px; margin: 0 13px 0 11px; background: #ababab; }
    .count { height: 39px; line-height: 46px; font-size: 16px; border-bottom: 2px solid #ababab; }
    .card { display: grid; grid-template-columns: 22px 1fr auto; grid-template-rows: 26px 40px; column-gap: 7px; margin-top: 12px; height: 75px; padding: 7px 5px 0 7px; background: #9fd5b7; }
    .card svg { margin-top: 2px; }
    .name { font: 300 21px/26px "Open Sans", sans-serif; }
    .rows { grid-column: 2; font-size: 18px; line-height: 40px; }
  `];

  render() {
    return html`
      <div class="top">
        <h2>Queries &amp; Connections</h2>
        <button aria-label="Pane options">${icon(20, 12, svg`<path d="M0.500 1L10 11L19.500 1" stroke="#222" stroke-width="1.600"/>`)}</button>
        <button aria-label="Close pane">${icon(16, 16, svg`<path d="M0.500 0.500L15.500 15.500M15.500 0.500L0.500 15.500" stroke="#222" stroke-width="1.600"/>`)}</button>
      </div>
      <div class="content">
        <div class="tabs" role="tablist">
          <button class="tab on" role="tab" aria-selected="true">Queries</button>
          <span class="bar"></span>
          <button class="tab" role="tab" aria-selected="false">Connections</button>
        </div>
        <div class="count">1 query</div>
        <div class="card">
          ${icon(22, 20, svg`<rect x="0.700" y="0.700" width="20.600" height="18.600" fill="#fff" stroke="#666" stroke-width="1.300"/>
            <rect x="0" y="0" width="22" height="4.500" fill="#4a7fbb"/>
            <path d="M1 9.500H21M1 14H21M7.500 4.500V19M14.500 4.500V19" stroke="#a3a0a0" stroke-width="1.200"/>`)}
          <span class="name">Excel files</span>
          ${icon(21, 24, svg`<path d="M1 1H11.500L16.500 6V22H1Z" fill="#fff" stroke="#666" stroke-width="1.400"/>
            <path d="M11.500 1V6H16.500" stroke="#666" stroke-width="1.300"/>
            <circle cx="14.500" cy="17" r="7.400" fill="#9fd5b7"/>${arrows(14.5, 17, 0.48, "#6a9e86", 2.4)}`)}
          <span class="rows">3 rows loaded.</span>
        </div>
      </div>`;
  }
}

/* ---------- status bar ---------- */

@customElement("status-bar")
class StatusBar extends LitElement {
  static styles = [base, css`
    .bar { display: flex; align-items: center; height: 33px; background: #f5f5f5; border-top: 1px solid #fff; padding: 0 12px 0 16px; font-size: 15px; color: #333; }
    .macro { margin-left: 29px; }
    .access { margin-left: 25px; gap: 3px; white-space: nowrap; }
    .views { display: flex; margin-left: auto; align-self: stretch; }
    .views button { width: 60px; justify-content: center; }
    .views .on { background: #e0e0e0; }
    .zoom { display: flex; align-items: center; gap: 8px; margin-left: 8px; }
    .zoom input { appearance: none; width: 148px; height: 18px; background: none; }
    .zoom input::-webkit-slider-runnable-track { height: 2px; background: #616161; }
    .zoom input::-webkit-slider-thumb { appearance: none; width: 8px; height: 17px; margin-top: -8px; background: #616161; }
    .pct { margin-left: 11px; }
  `];

  render() {
    return html`<footer class="bar">
      <span>Ready</span>
      <button class="macro" aria-label="Record macro">${icon(22, 20, svg`
        <path d="M8 18.500H1V1H21V8M1 4.500H21" stroke="#333" stroke-width="1.600"/>
        <path d="M3.500 8H10M3.500 11H8M3.500 14H7" stroke="#333" stroke-width="1.300"/>
        <circle cx="14.500" cy="13" r="6" stroke="#333" stroke-width="1.600"/><circle cx="14.500" cy="13" r="2.800" fill="#222"/>`)}</button>
      <button class="access">${icon(24, 22, svg`
        <circle cx="10" cy="3.500" r="2.500" stroke="#333" stroke-width="1.500"/>
        <path d="M7.500 5.500L3 3C0.500 2.500 0 5 2 6L6 8V12L3.500 19C3.500 21 5.500 21.500 6.500 19.500L8.500 14.500M12.500 5.500L17 3C19.500 2.500 20 5 18 6L14 8V11" stroke="#333" stroke-width="1.500"/>
        <path d="M11 16L15 20L23 11" stroke="#333" stroke-width="1.700"/>`)}Accessibility: Good to go</button>
      <div class="views">
        <button class="on" aria-label="Normal">${icon(20, 20, svg`<path d="M1 1H19V19H1ZM1 7H19M1 13H19M7 1V19M13 1V19" stroke="#222" stroke-width="1.500"/>`)}</button>
        <button aria-label="Page Layout">${icon(22, 20, svg`<path d="M1 1H21V19H1ZM5 4H17V16H5Z" stroke="#222" stroke-width="1.500"/><path d="M8 7H14M8 10H14M8 13H14" stroke="#222" stroke-width="1.400"/>`)}</button>
        <button aria-label="Page Break Preview">${icon(22, 20, svg`<path d="M1 1H21V19H1ZM1 12H13V1M7 1V12" stroke="#222" stroke-width="1.500"/>`)}</button>
      </div>
      <div class="zoom">
        <button aria-label="Zoom out">${icon(12, 12, svg`<path d="M0 6H12" stroke="#333" stroke-width="1.400"/>`)}</button>
        <input type="range" min="0" max="100" value="50" aria-label="Zoom">
        <button aria-label="Zoom in">${icon(12, 12, svg`<path d="M0 6H12M6 0V12" stroke="#333" stroke-width="1.400"/>`)}</button>
        <span class="pct">100%</span>
      </div>
    </footer>`;
  }
}

@customElement("app-root")
class AppRoot extends LitElement {
  static styles = css`
    :host { display: block; }
    .app { display: flex; flex-direction: column; height: 100vh; overflow: hidden; background: #efefef; font-family: "Open Sans", "Noto Sans", sans-serif; }
    .main { flex: 1; min-height: 0; display: flex; }
    work-sheet { flex: 1; }
    queries-pane { flex: 0 0 524px; }
  `;

  render() {
    return html`<div class="app">
      <title-bar></title-bar>
      <data-ribbon></data-ribbon>
      <formula-bar></formula-bar>
      <div class="main"><work-sheet></work-sheet><queries-pane></queries-pane></div>
      <status-bar></status-bar>
    </div>`;
  }
}
